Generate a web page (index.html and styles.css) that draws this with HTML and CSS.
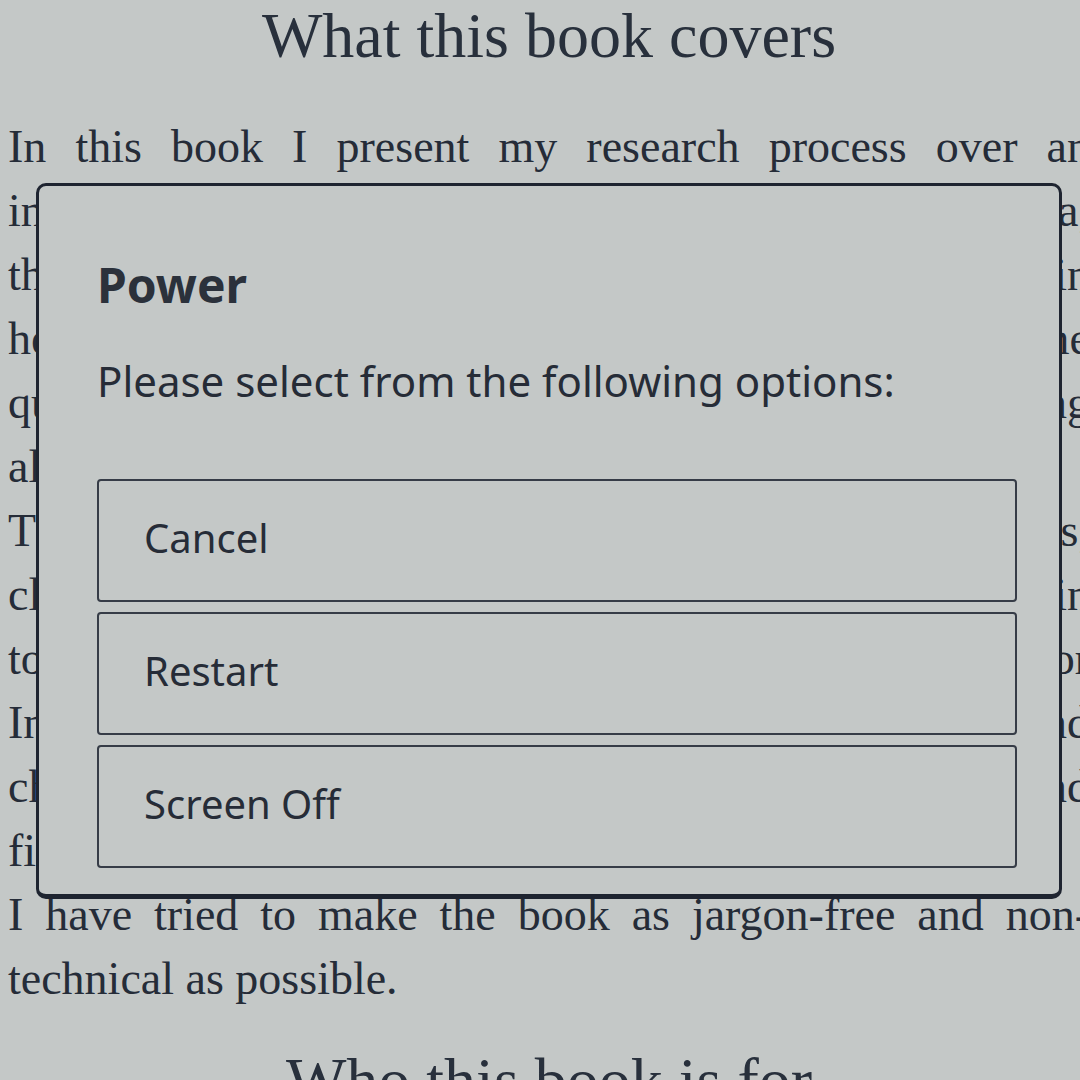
FILE: index.html
```html
<!DOCTYPE html>
<html lang="en">
<head>
<meta charset="utf-8">
<title>Power</title>
<link rel="stylesheet" href="styles.css">
</head>
<body>
<div class="page">
  <h1 class="chapter-title">What this book covers</h1>
  <p class="para">
    <span class="line">In this book I present my research process over an</span>
    <span class="line">interval of about one year of working on my idea,</span>
    <span class="line">the tools I have used and why I chose them in</span>
    <span class="line">helping me find answers to questions I came</span>
    <span class="line">quite often, and to solve problems along</span>
    <span class="line last">along the way.</span>
  </p>
  <p class="para">
    <span class="line">The book shows how to use several free tools,</span>
    <span class="line">cloud platforms and open source libraries in</span>
    <span class="line">to turn an idea into a working prototype for</span>
    <span class="line">In every chapter I explain the reasoning behind</span>
    <span class="line">choices and the alternatives I considered and</span>
    <span class="line last">findings.</span>
  </p>
  <p class="para">
    <span class="line">I have tried to make the book as jargon-free and non-</span>
    <span class="line last">technical as possible.</span>
  </p>
  <h1 class="chapter-title next">Who this book is for</h1>
</div>

<div class="dialog" role="dialog" aria-labelledby="power-title">
  <div class="dialog-title" id="power-title">Power</div>
  <div class="dialog-text">Please select from the following options:</div>
  <div class="options">
    <button class="option">Cancel</button>
    <button class="option">Restart</button>
    <button class="option">Screen Off</button>
  </div>
</div>
</body>
</html>
```

FILE: styles.css
```css
html, body {
  margin: 0;
  padding: 0;
  width: 1080px;
  height: 1080px;
  overflow: hidden;
  background: #c4c8c7;
}

body {
  position: relative;
  color: #252b36;
}

.page {
  width: 1082px;
  padding-left: 8px;
  font-family: "Liberation Serif", "Times New Roman", serif;
}

.chapter-title {
  margin: -2px 0 0 0;
  font-size: 64px;
  line-height: 76px;
  font-weight: normal;
  text-align: center;
  color: #28303c;
}

.chapter-title.next {
  margin-top: 32px;
}

.para {
  margin: 0;
  font-size: 46px;
  line-height: 64px;
  color: #252c38;
}

.para:first-of-type {
  margin-top: 41px;
}

.line {
  display: block;
  text-align: justify;
  text-align-last: justify;
  white-space: normal;
}

.line.last {
  text-align-last: left;
}

.dialog {
  position: absolute;
  left: 36px;
  top: 183px;
  width: 1026px;
  height: 716px;
  box-sizing: border-box;
  border: 3px solid #1e2430;
  border-bottom-width: 5px;
  border-radius: 10px;
  background: #c4c8c7;
  padding: 69px 42px 0 58px;
  font-family: "Noto Sans", "Open Sans", sans-serif;
  color: #262c37;
}

.dialog-title {
  font-size: 48px;
  line-height: 60px;
  font-weight: bold;
  color: #2b313b;
}

.dialog-text {
  margin-top: 40px;
  font-size: 42px;
  line-height: 52px;
}

.options {
  margin-top: 72px;
  display: flex;
  flex-direction: column;
  gap: 10px;
}

.option {
  display: flex;
  align-items: center;
  height: 123px;
  box-sizing: border-box;
  margin: 0;
  padding: 0 0 6px 45px;
  border: 2px solid #363c47;
  border-radius: 4px;
  background: transparent;
  font-family: inherit;
  font-size: 40px;
  line-height: 48px;
  color: #262c37;
  text-align: left;
}
```
